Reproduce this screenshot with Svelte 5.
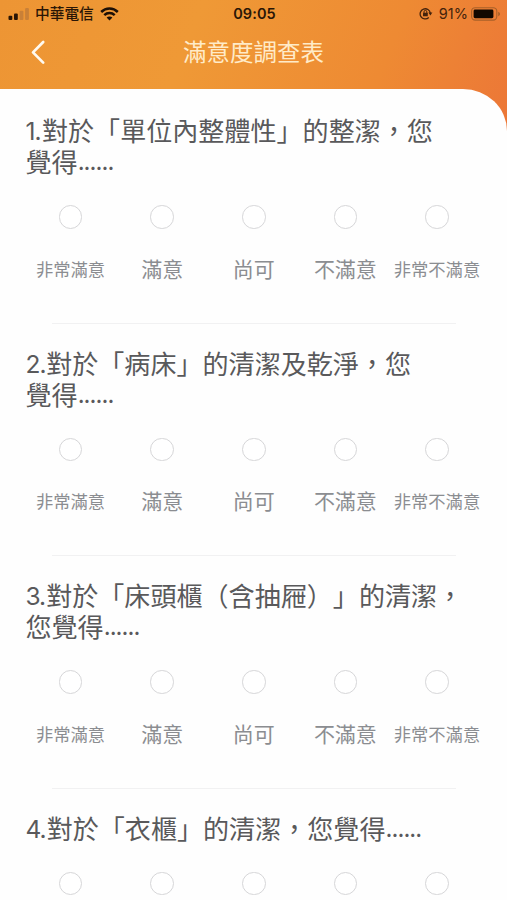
<script>
  const options = [
    { text: '非常滿意', small: true },
    { text: '滿意' },
    { text: '尚可' },
    { text: '不滿意' },
    { text: '非常不滿意', small: true }
  ];
  const questions = [
    { n: '1', w: 16.5, lines: ['對於「單位內整體性」的整潔，您', '覺得'] },
    { n: '2', w: 20.7, lines: ['對於「病床」的清潔及乾淨，您', '覺得'] },
    { n: '3', w: 20.7, lines: ['對於「床頭櫃（含抽屜）」的清潔，', '您覺得'] },
    { n: '4', w: 21.2, lines: ['對於「衣櫃」的清潔，您覺得'], partial: true }
  ];
</script>

<div class="screen">
  <header>
    <div class="status">
      <div class="left">
        <svg width="22" height="14" viewBox="0 0 22 14">
          <rect x="0.5" y="8.8" width="3.8" height="4.2" rx="1" fill="#2a1606" />
          <rect x="6" y="6.6" width="3.8" height="6.4" rx="1" fill="#2a1606" />
          <rect x="11.6" y="3.8" width="3.8" height="9.2" rx="1" fill="#c98037" />
          <rect x="17.1" y="1" width="3.8" height="12" rx="1" fill="#c98037" />
        </svg>
        <span class="carrier">中華電信</span>
        <svg class="wifi" width="19" height="14" viewBox="0 0 19 14" fill="none" stroke="#1d1006" stroke-width="2.5">
          <path d="M1.2 5C5.8 .4 13.2 .4 17.8 5" />
          <path d="M4.3 8.2c2.9-2.8 7.5-2.8 10.4 0" />
          <path d="M6.6 10.6c1.6-1.6 4.2-1.6 5.8 0L9.5 13.4z" fill="#1d1006" stroke="none" />
        </svg>
      </div>
      <span class="time">09:05</span>
      <div class="right">
        <svg width="14" height="13" viewBox="0 0 14 13" fill="none" stroke="#44230c" stroke-width="1.3">
          <path d="M9.8 10.5A5.1 5.1 0 1 1 11.3 6.2" />
          <path d="M9.4 5.6h4l-2 2.9z" fill="#44230c" stroke="none" />
          <rect x="4" y="5.8" width="4.8" height="3.5" rx=".5" fill="#44230c" stroke="none" />
          <path d="M5 6V4.8a1.4 1.4 0 0 1 2.8 0V6" stroke-width="1" />
        </svg>
        <span class="pct">91%</span>
        <svg width="30" height="14" viewBox="0 0 30 14">
          <rect x=".6" y=".7" width="25.2" height="12.4" rx="3.6" fill="none" stroke="#a86029" stroke-width="1.1" />
          <rect x="2.6" y="2.6" width="19.8" height="8.6" rx="1.4" fill="#120800" />
          <path d="M27.2 4.7c2.4 .8 2.4 3.7 0 4.5z" fill="#a86029" />
        </svg>
      </div>
    </div>
    <div class="nav">
      <svg class="back" width="16" height="26" viewBox="0 0 16 26" fill="none" stroke="#fffaf0" stroke-width="2.7" stroke-linecap="round" stroke-linejoin="round">
        <path d="M13.2 2 3 12.4 13.2 22.6" />
      </svg>
      <h1>滿意度調查表</h1>
    </div>
  </header>

  <main>
    {#each questions as q}
      <section>
        <h2>
          {#each q.lines as line, i}
            <div class="line">
              {#if i === 0}<span class="num" style="width: {q.w}px">{q.n}.</span>{/if}<span>{line}</span>{#if i === q.lines.length - 1}<span class="dots">......</span>{/if}
            </div>
          {/each}
        </h2>
        <div class="options">
          {#each options as o}
            <div class="option">
              <span class="radio"></span>
              {#if !q.partial}<span class="label" class:small={o.small}>{o.text}</span>{/if}
            </div>
          {/each}
        </div>
        {#if !q.partial}<div class="rule"></div>{/if}
      </section>
    {/each}
  </main>
</div>

<style>
  .screen {
    width: 507px;
    height: 900px;
    overflow: hidden;
    display: flex;
    flex-direction: column;
    font-family: Inter, 'Noto Sans CJK TC', sans-serif;
    text-spacing-trim: space-all;
    background: linear-gradient(112deg, #ed9534 0, #ef9936 190px, #ee8a33 380px, #ec7837 510px);
  }
  header {
    height: 88.5px;
    flex: none;
  }
  .status {
    height: 27px;
    display: grid;
    grid-template-columns: 1fr auto 1fr;
    align-items: center;
    padding: 0 6px 0 8px;
    color: #2a1606;
  }
  .left, .right {
    display: flex;
    align-items: center;
  }
  .right {
    justify-content: flex-end;
  }
  .carrier {
    margin-left: 5px;
    font-size: 14.7px;
    line-height: 20px;
    font-weight: 500;
  }
  .wifi {
    margin-left: 6px;
  }
  .time {
    font-size: 14.5px;
    font-weight: 600;
    letter-spacing: 0.1px;
  }
  .pct {
    margin: 0 3px 0 6px;
    font-size: 14.5px;
    color: #44230c;
  }
  .nav {
    height: 51px;
    display: grid;
    grid-template-columns: 1fr auto 1fr;
    align-items: center;
  }
  .back {
    margin-left: 30px;
  }
  h1 {
    margin: 0;
    grid-column: 2;
    font-size: 23.5px;
    line-height: 30px;
    font-weight: 400;
    color: #ffebc8;
  }
  main {
    flex: 1;
    min-height: 0;
    overflow: hidden;
    background: #fefefe;
    border-top-right-radius: 44px 42px;
    padding-top: 27.5px;
  }
  section {
    height: 232.5px;
    display: flex;
    flex-direction: column;
  }
  h2 {
    margin: 0 0 0 25.5px;
    font-size: 26.07px;
    font-weight: 400;
    color: #59595b;
  }
  .line {
    height: 31px;
    line-height: 31px;
    display: flex;
    white-space: nowrap;
  }
  .num {
    font-size: 24.5px;
    letter-spacing: -1px;
  }
  .dots {
    font-size: 24px;
    line-height: 30px;
    letter-spacing: -0.95px;
  }
  .options {
    display: grid;
    grid-template-columns: repeat(5, 91.6px);
    margin: 27px 0 0 24.8px;
  }
  .option {
    display: flex;
    flex-direction: column;
    align-items: center;
  }
  .radio {
    box-sizing: border-box;
    width: 23.5px;
    height: 23.5px;
    border: 1.6px solid #d6d6d8;
    border-radius: 50%;
    background: #fff;
  }
  .label {
    margin-top: 25px;
    height: 31px;
    line-height: 31px;
    font-size: 21px;
    color: #8b8d91;
    white-space: nowrap;
  }
  .small {
    font-size: 17.3px;
  }
  .rule {
    height: 1px;
    margin: 38px 51px 0 52px;
    background: #f1f1f2;
  }
</style>
